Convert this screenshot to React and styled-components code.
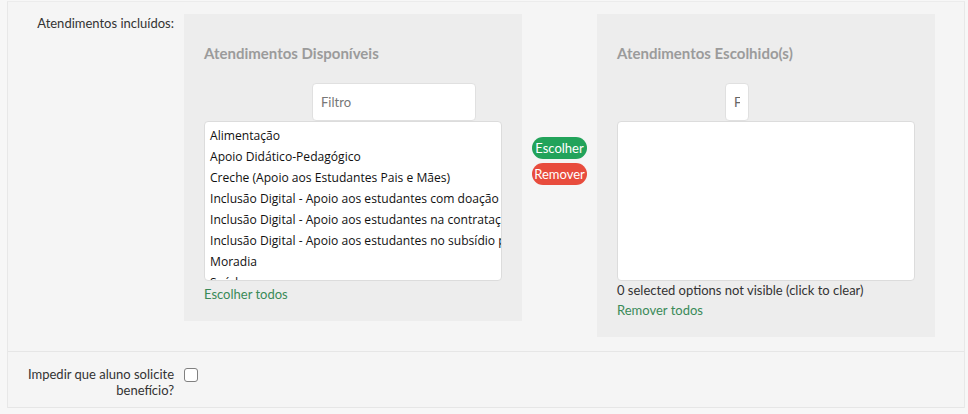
import React from "react";
import styled, { createGlobalStyle } from "styled-components";

const GlobalStyle = createGlobalStyle`
  body {
    margin: 0;
    background: #f7f7f7;
    font-family: Lato, "Liberation Sans", sans-serif;
    color: #333;
  }
`;

const Frame = styled.div`
  margin: 1px 3px 0 7px;
  background: #f5f5f5;
  border-left: 1px solid #e8e8e8;
  border-right: 1px solid #e8e8e8;
  border-top: 1px solid #ececec;
`;

const Row = styled.div`
  display: grid;
  grid-template-columns: 166px 1fr;
  column-gap: 10px;
  padding: ${(p) => p.$pad};
  border-bottom: 1px solid #e6e6e6;
`;

const Label = styled.label`
  text-align: right;
  font-size: 13px;
  line-height: 16px;
  color: #333;
  padding-top: ${(p) => p.$top || "0"};
`;

const Selector = styled.div`
  display: flex;
  align-items: flex-start;
`;

const Panel = styled.div`
  width: 338px;
  box-sizing: border-box;
  background: #ededed;
  padding: 20px 20px 17px;
`;

const Title = styled.h3`
  margin: 9px 0 20px;
  font-size: 15px;
  line-height: 20px;
  font-weight: 700;
  color: #9b9b9b;
`;

const Filter = styled.input`
  display: block;
  box-sizing: border-box;
  margin-left: 108px;
  width: ${(p) => p.$width}px;
  height: 38px;
  padding: 0 8px;
  border: 1px solid #e0e0e0;
  border-radius: 4px;
  background: #fff;
  font-family: Lato, sans-serif;
  font-size: 13px;
  color: #666;
  outline: none;
  &::placeholder {
    color: #777;
  }
`;

const List = styled.div`
  box-sizing: border-box;
  width: 298px;
  height: 160px;
  overflow: hidden;
  background: #fff;
  border: 1px solid #dcdcdc;
  border-radius: 4px;
  padding: 3px 0 0 5px;
`;

const Option = styled.div`
  font-family: "Open Sans", sans-serif;
  font-size: 12.1px;
  line-height: 21px;
  color: #111;
  white-space: nowrap;
`;

const Link = styled.a`
  display: block;
  margin-top: ${(p) => p.$top || "0"};
  font-size: 13px;
  line-height: 20px;
  color: #3a8a58;
  text-decoration: none;
  cursor: pointer;
`;

const Counter = styled.div`
  font-size: 13px;
  line-height: 18px;
  color: #333;
`;

const Middle = styled.div`
  width: 75px;
  box-sizing: border-box;
  padding: 123px 0 0 10px;
  display: flex;
  flex-direction: column;
  gap: 4px;
`;

const Pill = styled.button`
  width: 55px;
  height: 22px;
  padding: 0;
  border: none;
  border-radius: 11px;
  background: ${(p) => p.$color};
  color: #fff;
  font-family: Lato, sans-serif;
  font-size: 13px;
  line-height: 22px;
`;

const Check = styled.input`
  appearance: none;
  margin: 1px 0 0;
  width: 14px;
  height: 14px;
  border: 1px solid #808080;
  border-radius: 3px;
  background: #fff;
`;

const options = [
  "Alimentação",
  "Apoio Didático-Pedagógico",
  "Creche (Apoio aos Estudantes Pais e Mães)",
  "Inclusão Digital - Apoio aos estudantes com doação de equipamentos",
  "Inclusão Digital - Apoio aos estudantes na contratação de internet",
  "Inclusão Digital - Apoio aos estudantes no subsídio para aquisição",
  "Moradia",
  "Saúde",
];

export default function App() {
  return (
    <>
      <GlobalStyle />
      <Frame>
        <Row $pad="12px 0 14px">
          <Label $top="1px">Atendimentos incluídos:</Label>
          <Selector>
            <Panel>
              <Title>Atendimentos Disponíveis</Title>
              <Filter $width={164} placeholder="Filtro" />
              <List>
                {options.map((o) => (
                  <Option key={o}>{o}</Option>
                ))}
              </List>
              <Link $top="3px">Escolher todos</Link>
            </Panel>
            <Middle>
              <Pill $color="#22a35a">Escolher</Pill>
              <Pill $color="#e84c3d">Remover</Pill>
            </Middle>
            <Panel>
              <Title>Atendimentos Escolhido(s)</Title>
              <Filter $width={24} defaultValue="F" />
              <List />
              <Counter>0 selected options not visible (click to clear)</Counter>
              <Link $top="1px">Remover todos</Link>
            </Panel>
          </Selector>
        </Row>
        <Row $pad="14px 0 9px">
          <Label>
            Impedir que aluno solicite
            <br />
            benefício?
          </Label>
          <div>
            <Check type="checkbox" />
          </div>
        </Row>
      </Frame>
    </>
  );
}
